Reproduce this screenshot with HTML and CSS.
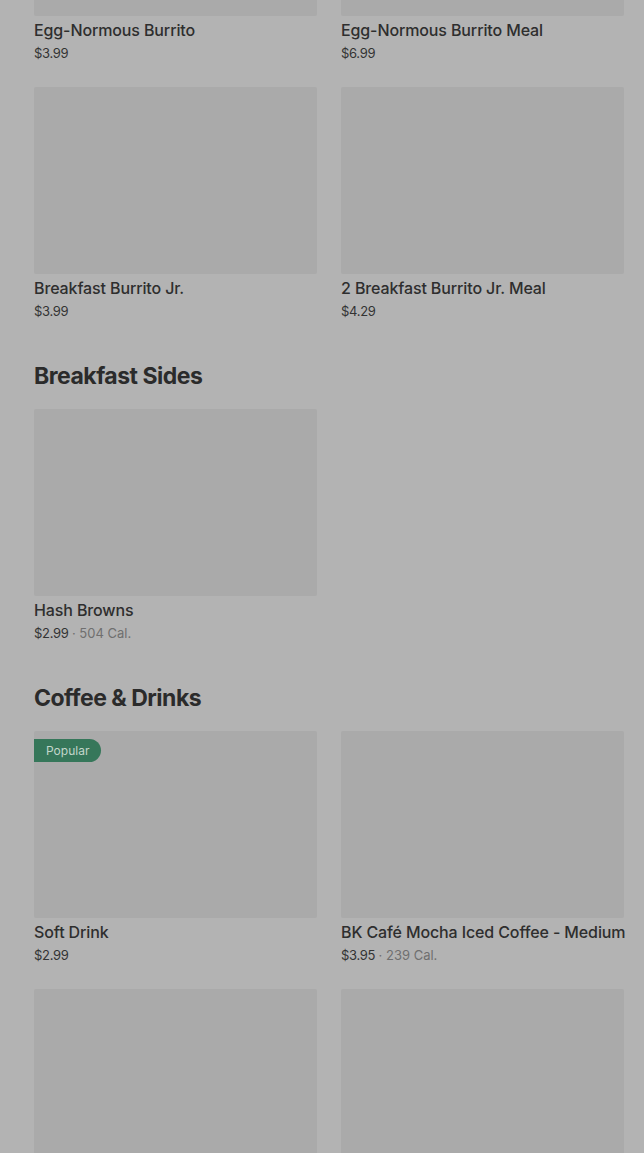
FILE: index.html
```html
<!DOCTYPE html>
<html lang="en">
<head>
<meta charset="utf-8">
<title>Menu</title>
<link rel="stylesheet" href="styles.css">
</head>
<body>
<main class="menu">
  <section class="section first">
    <div class="grid">
      <article class="card">
        <div class="thumb"></div>
        <h3 class="title">Egg-Normous Burrito</h3>
        <p class="price">$3.99</p>
      </article>
      <article class="card">
        <div class="thumb"></div>
        <h3 class="title">Egg-Normous Burrito Meal</h3>
        <p class="price">$6.99</p>
      </article>
      <article class="card">
        <div class="thumb"></div>
        <h3 class="title">Breakfast Burrito Jr.</h3>
        <p class="price">$3.99</p>
      </article>
      <article class="card">
        <div class="thumb"></div>
        <h3 class="title">2 Breakfast Burrito Jr. Meal</h3>
        <p class="price">$4.29</p>
      </article>
    </div>
  </section>

  <section class="section">
    <h2 class="heading">Breakfast Sides</h2>
    <div class="grid">
      <article class="card">
        <div class="thumb"></div>
        <h3 class="title">Hash Browns</h3>
        <p class="price">$2.99 <span class="cal">· 504 Cal.</span></p>
      </article>
    </div>
  </section>

  <section class="section">
    <h2 class="heading">Coffee &amp; Drinks</h2>
    <div class="grid">
      <article class="card">
        <div class="thumb"><span class="badge">Popular</span></div>
        <h3 class="title">Soft Drink</h3>
        <p class="price">$2.99</p>
      </article>
      <article class="card">
        <div class="thumb"></div>
        <h3 class="title">BK Café Mocha Iced Coffee - Medium</h3>
        <p class="price">$3.95 <span class="cal">· 239 Cal.</span></p>
      </article>
      <article class="card">
        <div class="thumb"></div>
      </article>
      <article class="card">
        <div class="thumb"></div>
      </article>
    </div>
  </section>
</main>
</body>
</html>
```

FILE: styles.css
```css
html, body {
  margin: 0;
  padding: 0;
}

body {
  background: #b3b3b3;
  font-family: Inter, "Noto Sans", "Liberation Sans", sans-serif;
  color: #2d2d2d;
  overflow: hidden;
  height: 1153px;
}

.menu {
  padding: 0 20px 0 34px;
  margin-top: -171px;
}

.section {
  padding-top: 38px;
}

.section.first {
  padding-top: 0;
}

.heading {
  margin: 0 0 17px;
  font-size: 23px;
  line-height: 32px;
  font-weight: 700;
  letter-spacing: -0.5px;
  color: #2b2b2b;
}

.grid {
  display: grid;
  grid-template-columns: 283px 283px;
  column-gap: 24px;
  row-gap: 23px;
}

.card {
  min-width: 0;
}

.thumb {
  position: relative;
  height: 187px;
  background: #aaaaaa;
  border-radius: 2px;
}

.badge {
  position: absolute;
  left: 0;
  top: 8px;
  height: 23px;
  padding: 0 12px;
  display: flex;
  align-items: center;
  background: #36775a;
  color: #c3d6cb;
  font-size: 12px;
  border-radius: 0 12px 12px 0;
}

.title {
  margin: 4px 0 0;
  font-size: 16px;
  line-height: 20px;
  font-weight: 500;
  letter-spacing: -0.12px;
  color: #2e2e2e;
  white-space: nowrap;
}

.price {
  margin: 2px 0 0;
  font-size: 13px;
  line-height: 22px;
  color: #333333;
  letter-spacing: -0.3px;
}

.cal {
  color: #6f6f6f;
  letter-spacing: 0;
}
```
